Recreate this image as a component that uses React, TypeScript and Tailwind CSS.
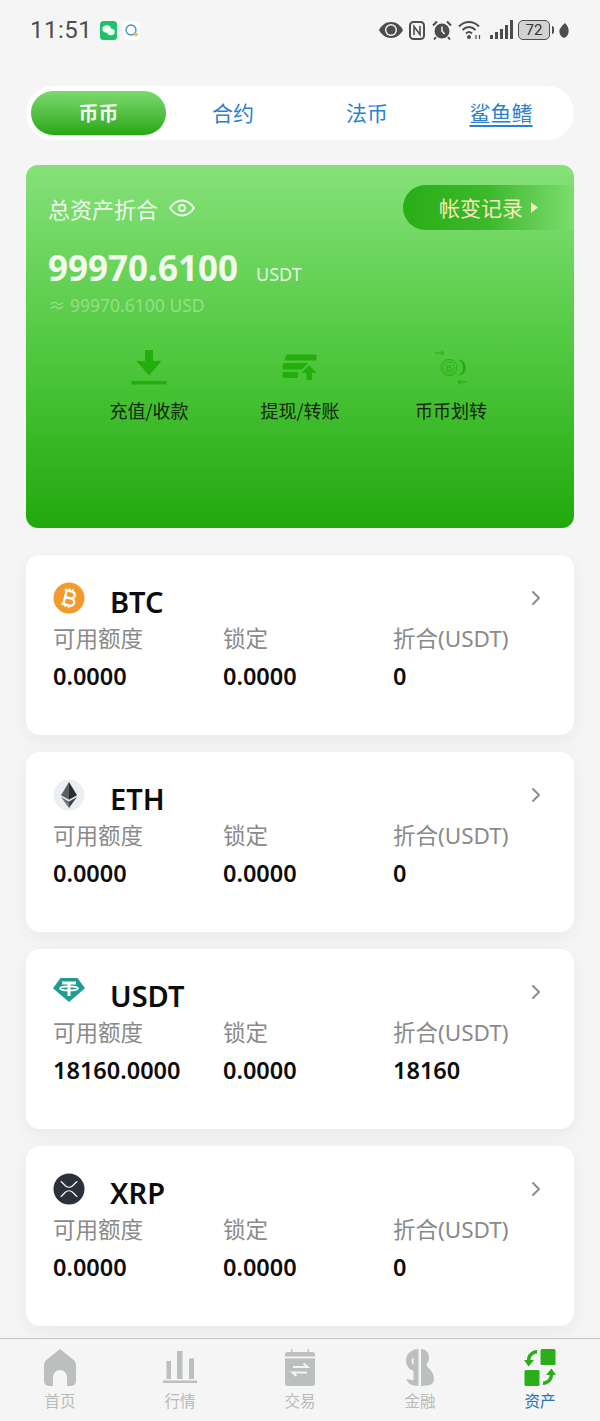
import { ChevronRight } from "lucide-react";
import type { ReactNode } from "react";

const LATIN = "font-['Noto_Sans','Noto_Sans_CJK_SC',sans-serif]";

const COINS = [
  { name: "BTC", icon: <BtcIcon />, available: "0.0000", locked: "0.0000", usdt: "0" },
  { name: "ETH", icon: <EthIcon />, available: "0.0000", locked: "0.0000", usdt: "0" },
  { name: "USDT", icon: <UsdtIcon />, available: "18160.0000", locked: "0.0000", usdt: "18160" },
  { name: "XRP", icon: <XrpIcon />, available: "0.0000", locked: "0.0000", usdt: "0" },
];

const ACTIONS = [
  { label: "充值/收款", icon: <DepositIcon /> },
  { label: "提现/转账", icon: <WithdrawIcon /> },
  { label: "币币划转", icon: <TransferIcon /> },
];

const NAV = [
  { label: "首页", icon: <HomeIcon /> },
  { label: "行情", icon: <MarketIcon /> },
  { label: "交易", icon: <TradeIcon /> },
  { label: "金融", icon: <FinanceIcon /> },
  { label: "资产", icon: <AssetsIcon />, active: true },
];

function BtcIcon() {
  return (
    <svg viewBox="0 0 32 32" className="h-[32px] w-[32px]">
      <circle cx="16" cy="16" r="15.5" fill="#f39a2c" />
      <g transform="rotate(14 16 16)" fill="none" stroke="#fff" strokeWidth="2.4">
        <path d="M12 9h5.5a3.5 3.5 0 0 1 0 7H12m0 0h6.5a3.6 3.6 0 0 1 0 7.2H12M12 8v16.2M10 9h3M10 23.2h3" />
        <path d="M14.5 6.5v2.5M17.8 6.5v2.5M14.5 23.2v2.5M17.8 23.2v2.5" strokeWidth="1.6" />
      </g>
    </svg>
  );
}

function EthIcon() {
  return (
    <svg viewBox="0 0 32 32" className="h-[32px] w-[32px]">
      <circle cx="16" cy="16" r="15.5" fill="#eceff1" />
      <path d="M16 3 8 16.2l8 4.6z" fill="#5b5f63" />
      <path d="M16 3l8 13.2-8 4.6z" fill="#2b2e31" />
      <path d="M8 18l8 11v-6.4z" fill="#6f7377" />
      <path d="M24 18l-8 11v-6.4z" fill="#3f4347" />
    </svg>
  );
}

function UsdtIcon() {
  return (
    <svg viewBox="0 0 32 32" className="h-[32px] w-[32px]">
      <path d="M7.5 2h17L32 12.2 16 26 0 12.2z" fill="#1f9c8e" />
      <path d="M9 7h14M16 7v13" stroke="#fff" strokeWidth="3" fill="none" />
      <ellipse cx="16" cy="12.4" rx="9" ry="2" fill="none" stroke="#fff" strokeWidth="1.6" />
    </svg>
  );
}

function XrpIcon() {
  return (
    <svg viewBox="0 0 32 32" className="h-[32px] w-[32px]">
      <circle cx="16" cy="16" r="15.5" fill="#2b313b" />
      <path
        d="M7 8.2h1.8l4.2 4.2a4.3 4.3 0 0 0 6 0l4.2-4.2H25l-5 5a5.7 5.7 0 0 1-8 0zM7 23.8h1.8l4.2-4.2a4.3 4.3 0 0 1 6 0l4.2 4.2H25l-5-5a5.7 5.7 0 0 0-8 0z"
        fill="#fff"
      />
    </svg>
  );
}

function DepositIcon() {
  return (
    <svg viewBox="0 0 36 36" className="h-[36px] w-[36px]" fill="#24ae0e">
      <path d="M14 0h8v11h8.5L18 25.5 5.500 11H14z" />
      <rect x="0.500" y="31" width="35" height="3.500" rx="0.500" />
    </svg>
  );
}

function WithdrawIcon() {
  return (
    <svg viewBox="0 0 36 36" className="h-[36px] w-[36px]" fill="#24ae0e">
      <path d="M4.500 4.500h29a1 1 0 0 1 1 1v4a1 1 0 0 1-1 1h-31z" />
      <path d="M2 13h24l-6 6.500H0.500v-4.500z" />
      <path d="M0.500 22h15.500v6H3a2.500 2.500 0 0 1-2.500-2.500z" />
      <path d="M27 15l7.500 8H30v7h-5.500v-7H19.500z" />
    </svg>
  );
}

function TransferIcon() {
  return (
    <svg viewBox="0 0 36 36" className="h-[36px] w-[36px]">
      <path d="M2 3h9M8 0.500 11 3 8 5.500M34 32h-9M28 29.500 25 32 28 34.500" fill="none" stroke="#24ae0e" strokeWidth="1" />
      <path d="M21 9a8.500 8.500 0 0 1 0 17 8.500 8.500 0 0 0 0-17z" fill="#24ae0e" />
      <path d="M25 9.500a8 8 0 0 1 0 16 9 9 0 0 0 0-16z" fill="#24ae0e" />
      <circle cx="16" cy="17.500" r="8" fill="none" stroke="#24ae0e" strokeWidth="1" />
      <circle cx="16" cy="17.500" r="5.500" fill="none" stroke="#24ae0e" strokeWidth="0.800" />
      <text x="16" y="21" textAnchor="middle" fontSize="9" fill="#24ae0e" fontFamily="Liberation Sans">B</text>
    </svg>
  );
}

function HomeIcon() {
  return (
    <svg viewBox="0 0 32 37" className="h-[37px] w-[32px]">
      <path
        d="M16 0 29 10.500c2 1.700 3 3.500 3 6V32a5 5 0 0 1-5 5h-4V28a7 7 0 0 0-14 0v9H5a5 5 0 0 1-5-5V16.500c0-2.500 1-4.300 3-6z"
        fill="#bcc0bc"
      />
    </svg>
  );
}

function MarketIcon() {
  return (
    <svg viewBox="0 0 34 32" className="h-[32px] w-[34px]" fill="#bcc0bc">
      <rect x="3.500" y="10" width="4.500" height="18" />
      <rect x="14" y="0" width="5.500" height="28" />
      <rect x="26" y="7.500" width="5" height="20.500" />
      <rect x="0" y="29.500" width="34" height="2.500" />
    </svg>
  );
}

function TradeIcon() {
  return (
    <svg viewBox="0 0 30 37" className="h-[37px] w-[30px]">
      <path
        d="M6 0h1.500v3h15V0H24v3h3a3 3 0 0 1 3 3v28a3 3 0 0 1-3 3H3a3 3 0 0 1-3-3V6a3 3 0 0 1 3-3h3z"
        fill="#bcc0bc"
      />
      <rect x="0" y="7.500" width="30" height="1.800" fill="#f4f5f4" />
      <path d="M8 18h14.500l-4-3.500M22 23.500H7.500l4 3.500" fill="none" stroke="#f4f5f4" strokeWidth="2" />
    </svg>
  );
}

function FinanceIcon() {
  return (
    <svg viewBox="0 0 28 37" className="h-[37px] w-[28px]" fill="#bcc0bc">
      <path d="M12.500 0v37C6 36.500 1.500 35 0.500 30l7 1.500V22C3 20 0 17 0 11.500 0 5 5 0.500 12.500 0zM7.500 8.500c-1.500 1-2 2-2 3.500s.7 3 2 4z" />
      <path d="M15 0c4.500 0 8 3.500 8 8.500 0 3-1 5-2.500 6.500 0 2 1 3 3 5 2.500 2.500 4.500 6 4.500 10 0 3.500-2 6-7 6.500l-6 .5z" />
    </svg>
  );
}

function AssetsIcon() {
  return (
    <svg viewBox="0 0 32 37" className="h-[37px] w-[32px]" fill="#2bae1a">
      <rect x="16.500" y="0" width="15" height="16" rx="1.500" />
      <rect x="0.500" y="21" width="15" height="16" rx="1.500" />
      <path d="M13 1v3.500C9 5 6.500 7.500 6.500 11H10l-5.500 6.500L0 11h3C3 5.500 7 1.500 13 1z" />
      <path d="M19 36v-3.500c4 -.5 6.500-3 6.500-6.500H22l5.500-6.500L32 26h-3c0 5.500-4 9.500-10 10z" />
    </svg>
  );
}

function StatusBar() {
  return (
    <div className="flex h-[60px] items-center justify-between pr-[31px] pl-[30px] text-[#4d4d4d]">
      <div className="flex items-center">
        <span className="font-['Roboto',sans-serif] text-[24px] leading-none tracking-[0.5px]">11:51</span>
        <svg viewBox="0 0 17 19" className="ml-[8px] h-[19px] w-[17px]">
          <rect width="17" height="19" rx="3.500" fill="#1fc16b" />
          <ellipse cx="6.800" cy="8" rx="4.500" ry="3.800" fill="#fff" />
          <ellipse cx="11" cy="11" rx="3.800" ry="3.200" fill="#e9fbf0" />
        </svg>
        <svg viewBox="0 0 17 19" className="ml-[6px] h-[19px] w-[17px]">
          <rect width="17" height="19" rx="3.500" fill="#fff" />
          <circle cx="8" cy="9" r="5" fill="none" stroke="#3d8fd6" strokeWidth="1.300" />
          <circle cx="13" cy="13.500" r="2" fill="#f2c14e" />
        </svg>
      </div>
      <div className="flex items-center">
        <svg viewBox="0 0 24 16" className="h-[16px] w-[24px]">
          <path d="M12 0C6.500 0 2.500 3.500 0 8c2.500 4.500 6.500 8 12 8s9.500-3.500 12-8c-2.500-4.500-6.500-8-12-8z" fill="#4d4d4d" />
          <circle cx="12" cy="8" r="6" fill="#f4f5f4" />
          <circle cx="12" cy="8" r="4.600" fill="#4d4d4d" />
        </svg>
        <svg viewBox="0 0 16 19" className="ml-[6px] h-[19px] w-[16px]" fill="none" stroke="#4d4d4d">
          <rect x="1" y="1" width="14" height="17" rx="3.500" strokeWidth="2" />
          <path d="M5 14V5.500l6 8V5" strokeWidth="1.600" />
        </svg>
        <svg viewBox="0 0 20 20" className="ml-[7px] h-[20px] w-[20px]">
          <circle cx="10" cy="11" r="7.500" fill="#4d4d4d" />
          <path d="M10 6.500V11l2.500 3" fill="none" stroke="#f4f5f4" strokeWidth="1.500" />
          <path d="M1 5.500 5 1.500M19 5.500l-4-4M4 17l-2 2.500M16 17l2 2.500" stroke="#4d4d4d" strokeWidth="2" />
        </svg>
        <svg viewBox="0 0 24 20" className="ml-[6px] h-[20px] w-[24px]" fill="none" stroke="#4d4d4d" strokeWidth="2">
          <path d="M1 6.500c6-6 14-6 20 0M4.500 10c4-4 9-4 13 0M8 13.500c2-2 4-2 6 0" />
          <circle cx="11" cy="17" r="2" fill="#4d4d4d" stroke="none" />
          <path d="M18 15v4M21.500 15v4" strokeWidth="1.200" />
        </svg>
        <div className="ml-[8px] flex h-[17px] items-end gap-[2px]">
          <span className="h-[4px] w-[3px] bg-[#4d4d4d]" />
          <span className="h-[7px] w-[3px] bg-[#4d4d4d]" />
          <span className="h-[10px] w-[3px] bg-[#4d4d4d]" />
          <span className="h-[14px] w-[3px] bg-[#4d4d4d]" />
          <span className="h-[19px] w-[3px] bg-[#4d4d4d]" />
        </div>
        <div className="relative ml-[5px] flex h-[20px] w-[32px] items-center justify-center rounded-[5px] border-[1.500px] border-[#4d4d4d] bg-[#d2d2d2] font-['Roboto',sans-serif] text-[15px] leading-none text-[#333]">
          72
        </div>
        <span className="ml-[2px] h-[8px] w-[2px] rounded-r bg-[#4d4d4d]" />
        <svg viewBox="0 0 10 16" className="ml-[5px] h-[15px] w-[10px]">
          <path d="M6 0c3 3 4 6 4 8.500C10 12 8 15 5 16 2 15 0 12 0 8.500 0 6 3 3 6 0z" fill="#4d4d4d" />
        </svg>
      </div>
    </div>
  );
}

function Tabs() {
  const rest = ["合约", "法币"];
  return (
    <div className="mx-[26px] mt-[26px] flex h-[54px] items-center rounded-[27px] bg-white px-[5px]">
      <div className="flex h-[44px] w-[135px] items-center justify-center rounded-[22px] bg-gradient-to-b from-[#7bd96c] to-[#22a80e] text-[20px] font-bold text-[#f3f8f0]">
        币币
      </div>
      {rest.map((t) => (
        <div key={t} className="w-[134px] text-center text-[21px] text-[#2a7fd0]">
          {t}
        </div>
      ))}
      <div className="w-[134px] text-center text-[21px] text-[#2a7fd0] underline underline-offset-4">鲨鱼鳍</div>
    </div>
  );
}

function AssetHero() {
  return (
    <div className="mx-[26px] mt-[25px] h-[363px] overflow-hidden rounded-[12px] bg-[linear-gradient(180deg,#86e17a_0%,#52c941_50%,#22a80d_100%)]">
      <div className="flex items-start justify-between pt-[20px] pl-[22px]">
        <div className="mt-[8px] flex items-center text-[22px] leading-[30px] text-[#f0faec]">
          总资产折合
          <svg viewBox="0 0 26 18" className="ml-[11px] h-[18px] w-[26px]" fill="none" stroke="#f0faec" strokeWidth="2">
            <path d="M1 9c3-4.500 7-7.500 12-7.500S22 4.500 25 9c-3 4.500-7 7.500-12 7.500S4 13.500 1 9z" />
            <circle cx="13" cy="9" r="3" />
          </svg>
        </div>
        <div className="flex h-[45px] w-[171px] items-center rounded-l-[23px] bg-gradient-to-r from-[#28ae16] via-[#3cb82b] to-[#7bdd6e] pl-[36px] text-[21px] text-[#f6e9bd]">
          帐变记录
          <svg viewBox="0 0 8 12" className="ml-[8px] h-[11px] w-[7px]" fill="#f6e9bd">
            <path d="M0 0l8 6-8 6z" />
          </svg>
        </div>
      </div>
      <div className={`mt-[16px] flex items-baseline pl-[22px] ${LATIN}`}>
        <span className="text-[35px] leading-[44px] font-bold text-[#f3faf0]">99970.6100</span>
        <span className="ml-[18px] text-[18px] text-[#e6f6e2]">USDT</span>
      </div>
      <div className={`mt-[3px] pl-[22px] text-[17.5px] leading-[24px] text-white/35 ${LATIN}`}>≈ 99970.6100 USD</div>
      <div className="mx-auto mt-[33px] grid w-[453px] grid-cols-3">
        {ACTIONS.map((a) => (
          <div key={a.label} className="flex flex-col items-center">
            {a.icon}
            <span className="mt-[11px] text-[18px] leading-[26px] text-[#10260c]">{a.label}</span>
          </div>
        ))}
      </div>
    </div>
  );
}

function Stat({ label, value }: { label: string; value: string }) {
  return (
    <div>
      <div className={`text-[22.500px] leading-[32px] text-[#8a8a8a] ${LATIN}`}>{label}</div>
      <div className={`mt-[5px] text-[23.500px] leading-[32px] font-semibold text-[#0c0c0c] ${LATIN}`}>{value}</div>
    </div>
  );
}

function CoinCard({ name, icon, available, locked, usdt }: { name: string; icon: ReactNode; available: string; locked: string; usdt: string }) {
  return (
    <div className="h-[180px] rounded-[14px] bg-white pt-[27px] pl-[27px] shadow-[0_6px_18px_rgba(0,0,0,0.05)]">
      <div className="relative flex items-start">
        {icon}
        <span className={`ml-[25px] text-[29px] leading-[40px] font-semibold text-[#0c0c0c] ${LATIN}`}>{name}</span>
        <ChevronRight className="absolute top-[4px] right-[26px] h-[24px] w-[24px] text-[#8d8d8d]" strokeWidth={2} />
      </div>
      <div className="mt-[1px] grid grid-cols-[170px_170px_1fr]">
        <Stat label="可用额度" value={available} />
        <Stat label="锁定" value={locked} />
        <Stat label="折合(USDT)" value={usdt} />
      </div>
    </div>
  );
}

function BottomNav() {
  return (
    <div className="grid h-[83px] grid-cols-5 border-t border-[#c4c6c4] bg-[#f4f5f4] pt-[9px]">
      {NAV.map((n) => (
        <div key={n.label} className="flex flex-col items-center">
          <div className="flex h-[38px] items-center">{n.icon}</div>
          <span className={`mt-[3px] text-[15.500px] leading-[22px] ${n.active ? "text-[#2a72b8]" : "text-[#b8bbb8]"}`}>{n.label}</span>
        </div>
      ))}
    </div>
  );
}

export default function App() {
  return (
    <div className="flex h-[1421px] w-[600px] flex-col overflow-hidden bg-[#f4f5f4] font-['Noto_Sans_CJK_SC',sans-serif]">
      <div className="min-h-0 flex-1 overflow-hidden">
        <StatusBar />
        <Tabs />
        <AssetHero />
        <div className="mx-[26px] mt-[27px] flex flex-col gap-[17px]">
          {COINS.map((c) => (
            <CoinCard key={c.name} {...c} />
          ))}
        </div>
      </div>
      <BottomNav />
    </div>
  );
}
